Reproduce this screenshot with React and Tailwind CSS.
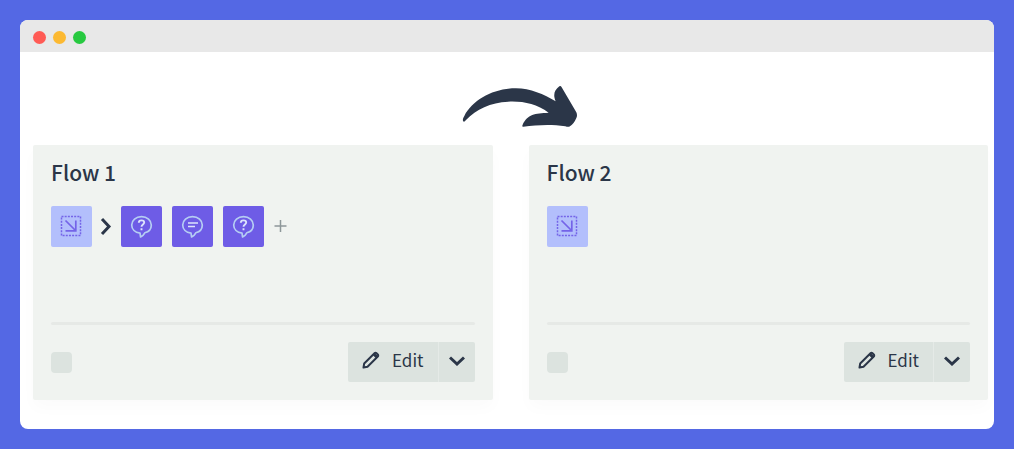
import React, { useState } from 'react';

const flows = [
  { id: 1, name: 'Flow 1', steps: ['question', 'message', 'question'] },
  { id: 2, name: 'Flow 2', steps: [] },
];

const TriggerIcon = () => (
  <svg viewBox="0 0 41 41" className="w-full" fill="none" stroke="#7464e8" aria-hidden="true">
    <rect x="10.500" y="10.500" width="19" height="19" strokeWidth="1.500" strokeDasharray="2 1.17" />
    <path d="M14.500 14.500l10 10M24.800 14.500v10.300H14.500" strokeWidth="1.700" />
  </svg>
);

const BubbleIcon = ({ type }) => (
  <svg viewBox="0 0 41 41" className="w-full" fill="none" stroke="#b5cdf3" strokeWidth="1.700" strokeLinejoin="round" aria-hidden="true">
    <path d="M20.500 10.700c-5.600 0-9.800 3.700-9.800 8.300 0 4.200 3.300 7.400 8.300 8.200l.6 3.800c2.200-1 3.200-2.200 4.200-4.200 4-1 6.500-4 6.500-7.800 0-4.600-4.200-8.300-9.800-8.300z" />
    {type === 'question' ? (
      <g stroke="#dce3fc" strokeWidth="1.900">
        <path d="M17.800 16.800c0-1.600 1-2.400 2.700-2.400s2.700.8 2.700 2.200c0 1.900-2.700 1.900-2.700 4.200" />
        <path d="M20.500 22.200v2" />
      </g>
    ) : (
      <path d="M16 17h10M16 20.500h7" stroke="#dce3fc" strokeWidth="1.600" />
    )}
  </svg>
);

const CurvedArrow = () => (
  <svg viewBox="66 45 348 129" className="w-[116px] h-[43px]" fill="#2b3648" aria-hidden="true">
    <path d="M72 155C66 153 69 145 73 138C99 88 162 55 228 55C271 55 312 73 347 94C338 72 344 60 358 49Q362 46 365 52L409 127Q413 136 409 144Q402 161 390 169Q385 172 376 169C333 162 290 165 250 170Q245 171 248 164C263 132 284 130 326 128C289 102 250 93 205 95C151 98 109 117 78 150Q74 155 72 155Z" />
  </svg>
);

const FlowCard = ({ flow }) => {
  const [checked, setChecked] = useState(false);

  return (
    <section className="flex-1 min-w-0 bg-[#f0f3f0] rounded-xs px-[18px] pt-[15px] pb-[18px] shadow-[0_8px_16px_rgba(0,0,0,0.02)]">
      <h2 className="text-[21px] leading-6 font-medium">{flow.name}</h2>

      {/* Steps */}
      <div className="flex items-center mt-[22px]">
        <button type="button" aria-label="Trigger" className="w-[41px] h-[41px] rounded-xs bg-[#b3bffc]">
          <TriggerIcon />
        </button>
        {flow.steps.length > 0 && (
          <>
            <svg viewBox="0 0 29 20" className="w-[29px] h-5" fill="none" stroke="#2b3648" strokeWidth="3" aria-hidden="true">
              <path d="M10 2l7 7.500-7 7.500" />
            </svg>
            <div className="flex items-center gap-2.5">
              {flow.steps.map((type, i) => (
                <button key={i} type="button" aria-label={type} className="w-[41px] h-[41px] rounded-xs bg-[#6e5ce6]">
                  <BubbleIcon type={type} />
                </button>
              ))}
              <button type="button" aria-label="Add step">
                <svg viewBox="0 0 14 14" className="w-3.5 h-3.5" stroke="#8d9799" strokeWidth="1.500" aria-hidden="true">
                  <path d="M6.500 0v12M.5 6h12" />
                </svg>
              </button>
            </div>
          </>
        )}
      </div>

      <hr className="mt-[75px] h-[3px] border-0 rounded-full bg-[#e6e9e6]" />

      {/* Footer */}
      <div className="flex items-center justify-between mt-[17px]">
        <input
          type="checkbox"
          aria-label={flow.name}
          checked={checked}
          onChange={(e) => setChecked(e.target.checked)}
          className="appearance-none w-[21px] h-[21px] rounded-sm bg-[#dce3df] checked:bg-[#6e5ce6]"
        />
        <div className="flex h-10 rounded-xs overflow-hidden bg-[#dce3df]">
          <button type="button" className="flex items-center gap-3 px-3.5 pb-1 text-[17px] leading-6">
            <svg viewBox="0 0 18 18" className="w-[18px] h-[18px]" fill="none" stroke="#2b3648" strokeWidth="2" strokeLinejoin="round" aria-hidden="true">
              <path d="M1.500 16.500l.7-4L12.500 2.200a1.400 1.400 0 0 1 2 0l1.300 1.300a1.400 1.400 0 0 1 0 2L5.500 15.800z" />
              <path d="M12 3.200L15 6.200" strokeWidth="3" />
            </svg>
            Edit
          </button>
          <button type="button" aria-label="More actions" className="flex items-center px-2.5 pb-0.5 border-l border-[#e5eae7]">
            <svg viewBox="0 0 16 10" className="w-4 h-2.5" fill="none" stroke="#2b3648" strokeWidth="3" aria-hidden="true">
              <path d="M1 1.500l7 6.500 7-6.500" />
            </svg>
          </button>
        </div>
      </div>
    </section>
  );
};

const App = () => {
  return (
    <div className="min-h-screen flex p-5 bg-[#5468e4] text-[#2b3648] font-['Noto_Sans_CJK_JP','Noto_Sans',sans-serif]">
      <div className="flex-1 min-w-0 bg-white rounded-lg overflow-hidden">
        {/* Title bar */}
        <div className="flex items-center gap-[7px] h-8 px-[13px] pt-0.5 bg-[#e8e8e8]">
          <span className="w-[13px] h-[13px] rounded-full bg-[#ff5b55]"></span>
          <span className="w-[13px] h-[13px] rounded-full bg-[#fcb932]"></span>
          <span className="w-[13px] h-[13px] rounded-full bg-[#27c940]"></span>
        </div>

        <main className="pl-[13px] pr-1.5 pb-7">
          <div className="flex justify-center pt-[33px] pb-[17px] pl-[18px]">
            <CurvedArrow />
          </div>
          <div className="flex gap-9">
            {flows.map((flow) => (
              <FlowCard key={flow.id} flow={flow} />
            ))}
          </div>
        </main>
      </div>
    </div>
  );
};

export default App;
